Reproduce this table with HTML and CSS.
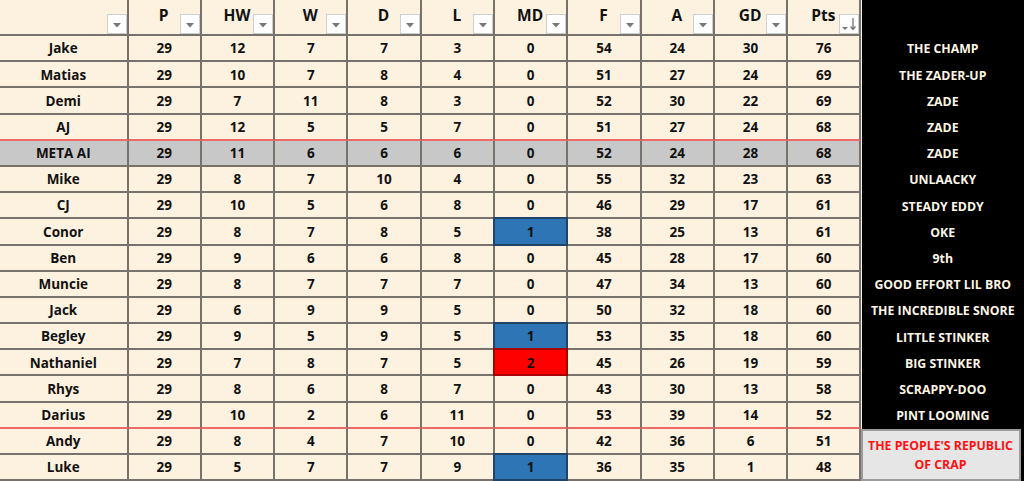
FILE: index.html
```html
<!DOCTYPE html>
<html>
<head>
<meta charset="utf-8">
<link rel="stylesheet" href="styles.css">
</head>
<body>
<div class="sheet">
  <div class="table">
    <div class="row head">
      <div class="cell"><span class="filter"><svg width="8" height="5" viewBox="0 0 8 5"><path d="M0 0H8L4 4.5Z" fill="#777"/></svg></span></div>
      <div class="cell">P<span class="filter"><svg width="8" height="5" viewBox="0 0 8 5"><path d="M0 0H8L4 4.5Z" fill="#777"/></svg></span></div>
      <div class="cell">HW<span class="filter"><svg width="8" height="5" viewBox="0 0 8 5"><path d="M0 0H8L4 4.5Z" fill="#777"/></svg></span></div>
      <div class="cell">W<span class="filter"><svg width="8" height="5" viewBox="0 0 8 5"><path d="M0 0H8L4 4.5Z" fill="#777"/></svg></span></div>
      <div class="cell">D<span class="filter"><svg width="8" height="5" viewBox="0 0 8 5"><path d="M0 0H8L4 4.5Z" fill="#777"/></svg></span></div>
      <div class="cell">L<span class="filter"><svg width="8" height="5" viewBox="0 0 8 5"><path d="M0 0H8L4 4.5Z" fill="#777"/></svg></span></div>
      <div class="cell">MD<span class="filter"><svg width="8" height="5" viewBox="0 0 8 5"><path d="M0 0H8L4 4.5Z" fill="#777"/></svg></span></div>
      <div class="cell">F<span class="filter"><svg width="8" height="5" viewBox="0 0 8 5"><path d="M0 0H8L4 4.5Z" fill="#777"/></svg></span></div>
      <div class="cell">A<span class="filter"><svg width="8" height="5" viewBox="0 0 8 5"><path d="M0 0H8L4 4.5Z" fill="#777"/></svg></span></div>
      <div class="cell">GD<span class="filter"><svg width="8" height="5" viewBox="0 0 8 5"><path d="M0 0H8L4 4.5Z" fill="#777"/></svg></span></div>
      <div class="cell">Pts<span class="filter sort"><svg width="18" height="14" viewBox="0 0 18 14"><path d="M2 10H8L5 13Z" fill="#777"/><path d="M13 1V12M10.5 9.5L13 12.5L15.5 9.5" stroke="#777" stroke-width="1.3" fill="none"/></svg></span></div>
    </div>
    <div class="row"><div class="cell">Jake</div><div class="cell">29</div><div class="cell">12</div><div class="cell">7</div><div class="cell">7</div><div class="cell">3</div><div class="cell">0</div><div class="cell">54</div><div class="cell">24</div><div class="cell">30</div><div class="cell">76</div></div>
    <div class="row"><div class="cell">Matias</div><div class="cell">29</div><div class="cell">10</div><div class="cell">7</div><div class="cell">8</div><div class="cell">4</div><div class="cell">0</div><div class="cell">51</div><div class="cell">27</div><div class="cell">24</div><div class="cell">69</div></div>
    <div class="row"><div class="cell">Demi</div><div class="cell">29</div><div class="cell">7</div><div class="cell">11</div><div class="cell">8</div><div class="cell">3</div><div class="cell">0</div><div class="cell">52</div><div class="cell">30</div><div class="cell">22</div><div class="cell">69</div></div>
    <div class="row cut"><div class="cell">AJ</div><div class="cell">29</div><div class="cell">12</div><div class="cell">5</div><div class="cell">5</div><div class="cell">7</div><div class="cell">0</div><div class="cell">51</div><div class="cell">27</div><div class="cell">24</div><div class="cell">68</div></div>
    <div class="row meta"><div class="cell">META AI</div><div class="cell">29</div><div class="cell">11</div><div class="cell">6</div><div class="cell">6</div><div class="cell">6</div><div class="cell">0</div><div class="cell">52</div><div class="cell">24</div><div class="cell">28</div><div class="cell">68</div></div>
    <div class="row"><div class="cell">Mike</div><div class="cell">29</div><div class="cell">8</div><div class="cell">7</div><div class="cell">10</div><div class="cell">4</div><div class="cell">0</div><div class="cell">55</div><div class="cell">32</div><div class="cell">23</div><div class="cell">63</div></div>
    <div class="row"><div class="cell">CJ</div><div class="cell">29</div><div class="cell">10</div><div class="cell">5</div><div class="cell">6</div><div class="cell">8</div><div class="cell">0</div><div class="cell">46</div><div class="cell">29</div><div class="cell">17</div><div class="cell">61</div></div>
    <div class="row"><div class="cell">Conor</div><div class="cell">29</div><div class="cell">8</div><div class="cell">7</div><div class="cell">8</div><div class="cell">5</div><div class="cell md1">1</div><div class="cell">38</div><div class="cell">25</div><div class="cell">13</div><div class="cell">61</div></div>
    <div class="row"><div class="cell">Ben</div><div class="cell">29</div><div class="cell">9</div><div class="cell">6</div><div class="cell">6</div><div class="cell">8</div><div class="cell">0</div><div class="cell">45</div><div class="cell">28</div><div class="cell">17</div><div class="cell">60</div></div>
    <div class="row"><div class="cell">Muncie</div><div class="cell">29</div><div class="cell">8</div><div class="cell">7</div><div class="cell">7</div><div class="cell">7</div><div class="cell">0</div><div class="cell">47</div><div class="cell">34</div><div class="cell">13</div><div class="cell">60</div></div>
    <div class="row"><div class="cell">Jack</div><div class="cell">29</div><div class="cell">6</div><div class="cell">9</div><div class="cell">9</div><div class="cell">5</div><div class="cell">0</div><div class="cell">50</div><div class="cell">32</div><div class="cell">18</div><div class="cell">60</div></div>
    <div class="row"><div class="cell">Begley</div><div class="cell">29</div><div class="cell">9</div><div class="cell">5</div><div class="cell">9</div><div class="cell">5</div><div class="cell md1">1</div><div class="cell">53</div><div class="cell">35</div><div class="cell">18</div><div class="cell">60</div></div>
    <div class="row"><div class="cell">Nathaniel</div><div class="cell">29</div><div class="cell">7</div><div class="cell">8</div><div class="cell">7</div><div class="cell">5</div><div class="cell md2">2</div><div class="cell">45</div><div class="cell">26</div><div class="cell">19</div><div class="cell">59</div></div>
    <div class="row"><div class="cell">Rhys</div><div class="cell">29</div><div class="cell">8</div><div class="cell">6</div><div class="cell">8</div><div class="cell">7</div><div class="cell">0</div><div class="cell">43</div><div class="cell">30</div><div class="cell">13</div><div class="cell">58</div></div>
    <div class="row cut"><div class="cell">Darius</div><div class="cell">29</div><div class="cell">10</div><div class="cell">2</div><div class="cell">6</div><div class="cell">11</div><div class="cell">0</div><div class="cell">53</div><div class="cell">39</div><div class="cell">14</div><div class="cell">52</div></div>
    <div class="row"><div class="cell">Andy</div><div class="cell">29</div><div class="cell">8</div><div class="cell">4</div><div class="cell">7</div><div class="cell">10</div><div class="cell">0</div><div class="cell">42</div><div class="cell">36</div><div class="cell">6</div><div class="cell">51</div></div>
    <div class="row"><div class="cell">Luke</div><div class="cell">29</div><div class="cell">5</div><div class="cell">7</div><div class="cell">7</div><div class="cell">9</div><div class="cell md1">1</div><div class="cell">36</div><div class="cell">35</div><div class="cell">1</div><div class="cell">48</div></div>
  </div>
  <div class="labels">
    <div class="labels-black">
      <div class="label-head"></div>
      <div class="label">THE CHAMP</div>
      <div class="label">THE ZADER-UP</div>
      <div class="label">ZADE</div>
      <div class="label">ZADE</div>
      <div class="label">ZADE</div>
      <div class="label">UNLAACKY</div>
      <div class="label">STEADY EDDY</div>
      <div class="label">OKE</div>
      <div class="label">9th</div>
      <div class="label">GOOD EFFORT LIL BRO</div>
      <div class="label">THE INCREDIBLE SNORE</div>
      <div class="label">LITTLE STINKER</div>
      <div class="label">BIG STINKER</div>
      <div class="label">SCRAPPY-DOO</div>
      <div class="label">PINT LOOMING</div>
    </div>
    <div class="republic">THE PEOPLE'S REPUBLIC<br>OF CRAP</div>
  </div>
</div>
</body>
</html>
```
FILE: styles.css
```css
html, body {
  margin: 0;
  padding: 0;
  background: #000;
}
body {
  width: 1024px;
  height: 481px;
  overflow: hidden;
  font-family: "Open Sans", "Noto Sans", sans-serif;
  font-weight: 700;
  color: #111;
}
.sheet {
  display: flex;
  width: 1024px;
  height: 481px;
}
.table {
  width: 861.5px;
  flex: none;
  background: #fdf2df;
  display: flex;
  flex-direction: column;
}
.row {
  display: grid;
  grid-template-columns: 128.5px repeat(10, 73.3px);
  height: 26.2px;
  flex: none;
}
.row.head {
  height: 36px;
}
.cell {
  box-sizing: border-box;
  border-right: 2px solid #77736c;
  border-bottom: 2px solid #77736c;
  display: flex;
  align-items: center;
  justify-content: center;
  font-size: 13.5px;
  line-height: 1;
  padding-top: 2px;
  position: relative;
}
.head .cell {
  font-size: 15.5px;
  padding-top: 0;
  padding-bottom: 2px;
  padding-right: 1px;
}
.filter {
  position: absolute;
  right: 0;
  bottom: 0;
  width: 20px;
  height: 20px;
  box-sizing: border-box;
  background: #fff;
  border: 1px solid #cfcfcf;
  display: flex;
  align-items: center;
  justify-content: center;
}
.filter svg {
  display: block;
  margin-top: 2px;
}
.filter.sort svg {
  margin-top: 0;
}
.row.cut .cell {
  border-bottom-color: #ec6a6a;
}
.row.meta .cell {
  background: #c8c8c8;
}
.cell.md1 {
  background: #2e75b6;
  border: 2px solid #1f4468;
  margin-top: -2px;
  height: calc(100% + 2px);
  margin-left: -2px;
  width: calc(100% + 2px);
}
.cell.md2 {
  background: #ff0000;
  border: 2px solid #a80000;
  margin-top: -2px;
  height: calc(100% + 2px);
  margin-left: -2px;
  width: calc(100% + 2px);
}
.labels {
  flex: 1;
  display: flex;
  flex-direction: column;
  background: #000;
}
.labels-black {
  display: flex;
  flex-direction: column;
}
.label-head {
  height: 36px;
}
.label {
  height: 26.2px;
  display: flex;
  align-items: center;
  justify-content: center;
  color: #fdf6e6;
  font-size: 12.3px;
  line-height: 1;
  padding-top: 1px;
  box-sizing: border-box;
}
.republic {
  box-sizing: border-box;
  height: 52.4px;
  width: 160px;
  background: #e6e6e6;
  border: 2px solid #9c9c9c;
  color: #ff1010;
  font-size: 12.3px;
  line-height: 19px;
  text-align: center;
  display: flex;
  align-items: center;
  justify-content: center;
  margin-left: -1px;
}
```
